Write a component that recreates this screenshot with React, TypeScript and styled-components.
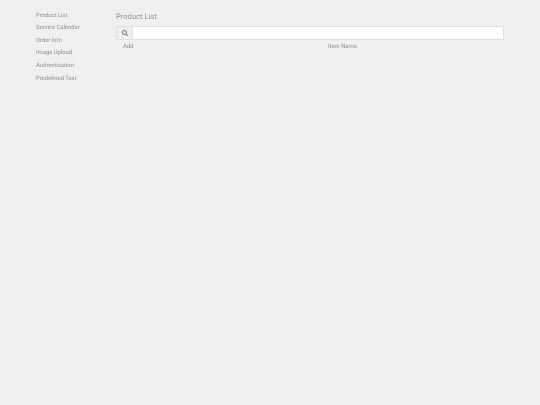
import React from 'react'
import styled, { createGlobalStyle } from 'styled-components'
import { FaSearch } from 'react-icons/fa'

const GlobalStyle = createGlobalStyle`
  html, body {
    margin: 0;
    height: 100%;
    background: #f0f0f0;
  }
  body {
    font-family: Roboto, "Liberation Sans", sans-serif;
    color: #999;
    text-rendering: geometricPrecision;
  }
`

const Page = styled.div`
  display: flex;
  width: 540px;
  height: 405px;
  overflow: hidden;
  will-change: opacity;
`

const Sidebar = styled.nav`
  width: 116px;
  flex: none;
  padding: 9.6px 0 0 36px;
  box-sizing: border-box;
`

const NavLink = styled.a`
  display: block;
  height: 12.6px;
  line-height: 13px;
  font-size: 5.85px;
  color: #8f8f8f;
`

const Main = styled.main`
  width: 388px;
  flex: none;
  padding-top: 11px;
`

const Title = styled.h1`
  margin: 0 0 4px;
  font-size: 7.6px;
  line-height: 11px;
  font-weight: 400;
  color: #929292;
`

const SearchBar = styled.div`
  display: flex;
  height: 14px;
`

const SearchAddon = styled.span`
  display: flex;
  align-items: center;
  justify-content: center;
  width: 16px;
  box-sizing: border-box;
  border: 1px solid #e0e0e0;
  border-right: 0;
  border-radius: 1px 0 0 1px;
  background: #eeeeee;
  color: #777;
  font-size: 6px;
`

const SearchInput = styled.input`
  flex: 1;
  min-width: 0;
  padding: 0 4px;
  box-sizing: border-box;
  border: 1px solid #e0e0e0;
  border-radius: 0 1px 1px 0;
  background: #fff;
  outline: 0;
`

const HeaderRow = styled.div`
  display: grid;
  grid-template-columns: 205px 1fr;
  padding: 0.5px 0 0 7px;
  font-size: 5.85px;
  line-height: 12px;
  color: #8f8f8f;
`

const links = ['Product List', 'Service Calendar', 'Order Info', 'Image Upload', 'Authentication', 'Predefined Text']

export default function App() {
  return (
    <Page>
      <GlobalStyle />
      <Sidebar>
        {links.map((link) => (
          <NavLink key={link}>{link}</NavLink>
        ))}
      </Sidebar>
      <Main>
        <Title>Product List</Title>
        <SearchBar>
          <SearchAddon>
            <FaSearch />
          </SearchAddon>
          <SearchInput />
        </SearchBar>
        <HeaderRow>
          <span>Add</span>
          <span>Item Name</span>
        </HeaderRow>
      </Main>
    </Page>
  )
}
